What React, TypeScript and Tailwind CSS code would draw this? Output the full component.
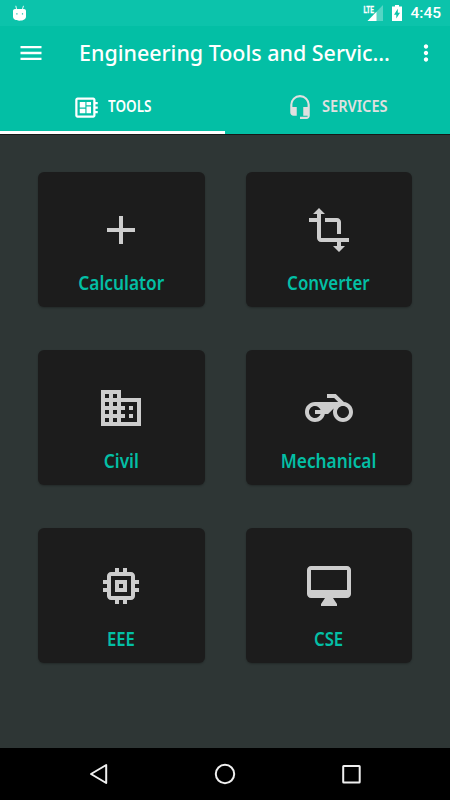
import type { ComponentType } from 'react';
import {
  MdAdd,
  MdDeveloperBoard,
  MdDomain,
  MdHeadsetMic,
  MdMemory,
  MdMenu,
  MdMoreVert,
  MdTransform,
} from 'react-icons/md';

type Tool = { label: string; icon: ComponentType<{ className?: string }>; scale: string };

function Motorcycle({ className }: { className?: string }) {
  return (
    <svg viewBox="0 0 24 24" fill="currentColor" className={className}>
      <path d="M19.44 9.03L15.41 5H11v2h3.59l2 2H5c-2.8 0-5 2.2-5 5s2.2 5 5 5c2.46 0 4.45-1.69 4.9-4h1.65l2.77-2.77c-.21.54-.32 1.14-.32 1.77 0 2.8 2.2 5 5 5s5-2.2 5-5c0-2.65-1.97-4.77-4.56-4.97zM7.82 15C7.4 16.15 6.28 17 5 17c-1.63 0-3-1.37-3-3s1.37-3 3-3c1.28 0 2.4.85 2.82 2H5v2h2.82zM19 17c-1.66 0-3-1.34-3-3s1.34-3 3-3 3 1.34 3 3-1.34 3-3 3z" />
    </svg>
  );
}

function Desktop({ className }: { className?: string }) {
  return (
    <svg viewBox="0 0 24 24" fill="currentColor" fillRule="evenodd" className={className}>
      <path d="M21 2H3c-1.1 0-2 .9-2 2v12c0 1.1.9 2 2 2h7l-2 3v1h8v-1l-2-3h7c1.1 0 2-.9 2-2V4c0-1.1-.9-2-2-2zm0 12H3V4h18v10z" />
    </svg>
  );
}

const tools: Tool[] = [
  { label: 'Calculator', icon: MdAdd, scale: 'scale-x-[0.91]' },
  { label: 'Converter', icon: MdTransform, scale: 'scale-x-[0.89]' },
  { label: 'Civil', icon: MdDomain, scale: 'scale-x-[0.91]' },
  { label: 'Mechanical', icon: Motorcycle, scale: 'scale-x-[0.91]' },
  { label: 'EEE', icon: MdMemory, scale: 'scale-x-[0.88]' },
  { label: 'CSE', icon: Desktop, scale: 'scale-x-[0.88]' },
];

function StatusBar() {
  return (
    <div className="flex h-[26px] items-center bg-[#0cc3ab] pr-[9px] pl-[13px] text-white">
      <svg viewBox="0 0 13 16" className="h-4 w-[13px]">
        <path
          d="M3.5 4 2.8.8M9.5 4l1-3.2"
          stroke="currentColor"
          strokeWidth="0.9"
          fill="none"
        />
        <path
          fill="currentColor"
          fillRule="evenodd"
          d="M2 4h9c1.1 0 2 .9 2 2v5.5c0 2.5-2.5 4.2-6.5 4.2S0 14 0 11.5V6c0-1.1.9-2 2-2zm1.3 4.3v1.2h1.2V8.3zm5.6 0v1.2h1.2V8.3z"
        />
      </svg>
      <div className="ml-auto flex items-center">
        <svg viewBox="0 0 21 18" className="mr-[8px] h-[18px] w-[21px]">
          <path d="M20 1V17H4.5z" fill="#fff" fillOpacity="0.3" />
          <path d="M13.5 7.7V17H4.5z" fill="#fff" />
          <text
            x="0.5"
            y="8.5"
            fill="#fff"
            stroke="#fff"
            strokeWidth="0.3"
            fontSize="9.5"
            fontWeight="700"
            textLength="10.5"
            lengthAdjust="spacingAndGlyphs"
            fontFamily="Roboto, sans-serif"
          >
            LTE
          </text>
        </svg>
        <svg viewBox="0 0 10 16" className="mr-[8px] h-[16px] w-[10px]">
          <path
            fill="currentColor"
            fillRule="evenodd"
            d="M3 0h4v1.6h3V16H0V1.6h3zM5.8 3.8 2 9.7h2.3v3.7L8 7.7H5.8z"
          />
        </svg>
        <span className="relative top-px font-[Roboto,sans-serif] text-[15.5px] font-medium">4:45</span>
      </div>
    </div>
  );
}

function AppBar() {
  return (
    <div className="flex h-[54px] items-center text-white">
      <MdMenu className="ml-[16.5px] size-[28px] shrink-0" />
      <h1 className="ml-[34.5px] w-[315px] origin-left scale-x-[0.953] text-[22.5px] font-medium whitespace-nowrap">
        Engineering Tools and Servic…
      </h1>
      <MdMoreVert className="mr-[11px] ml-auto size-[26px] shrink-0" />
    </div>
  );
}

function Tabs() {
  return (
    <div className="grid h-[54px] grid-cols-2 text-[15.5px] font-semibold">
      <button className="flex items-center justify-center gap-[8px] border-b-[3px] border-white pt-[3px] text-white">
        <MdDeveloperBoard className="size-[27px]" />
        <span className="w-[44px] origin-left scale-x-[0.87] text-left">TOOLS</span>
      </button>
      <button className="flex items-center justify-center gap-[9px] border-b-[3px] border-transparent pt-[3px] text-[#e0e0e0]">
        <MdHeadsetMic className="size-[26px]" />
        <span className="w-[66px] origin-left scale-x-[0.94] text-left">SERVICES</span>
      </button>
    </div>
  );
}

function ToolCard({ label, icon: Icon, scale }: Tool) {
  return (
    <button className="flex h-[134.5px] flex-col items-center rounded-[6px] bg-[#1c1c1c] pt-[33.5px] shadow-[0_1px_2px_rgba(0,0,0,0.25)]">
      <Icon className="size-[48px] text-[#cdcdcd]" />
      <span className={`mt-[15px] text-[19px] leading-[28px] font-semibold text-[#03bfa5] ${scale}`}>
        {label}
      </span>
    </button>
  );
}

function NavBar() {
  return (
    <div className="flex h-[52px] items-center bg-black pl-[88px]">
      <svg viewBox="0 0 22 22" className="size-[22px]" fill="none" stroke="#efefef" strokeWidth="2">
        <path d="M18.2 2v18L3 11z" strokeLinejoin="round" />
      </svg>
      <svg viewBox="0 0 22 22" className="ml-[104px] size-[22px]" fill="none" stroke="#efefef" strokeWidth="2">
        <circle cx="11" cy="11" r="9.2" />
      </svg>
      <svg viewBox="0 0 22 22" className="ml-[104px] size-[22px]" fill="none" stroke="#efefef" strokeWidth="2">
        <rect x="3.2" y="3" width="16.5" height="16.5" rx="0.5" />
      </svg>
    </div>
  );
}

export default function App() {
  return (
    <div className="flex h-[800px] w-[450px] flex-col overflow-hidden bg-[#2e3635] font-['Noto_Sans',sans-serif]">
      <header className="border-b border-[#151918] bg-[#03bfa5]">
        <StatusBar />
        <AppBar />
        <Tabs />
      </header>
      <main className="grid flex-1 grid-cols-[166.5px_166.5px] content-start gap-x-[41px] gap-y-[43.5px] pt-[37.4px] pl-[38px]">
        {tools.map((tool) => (
          <ToolCard key={tool.label} {...tool} />
        ))}
      </main>
      <NavBar />
    </div>
  );
}
